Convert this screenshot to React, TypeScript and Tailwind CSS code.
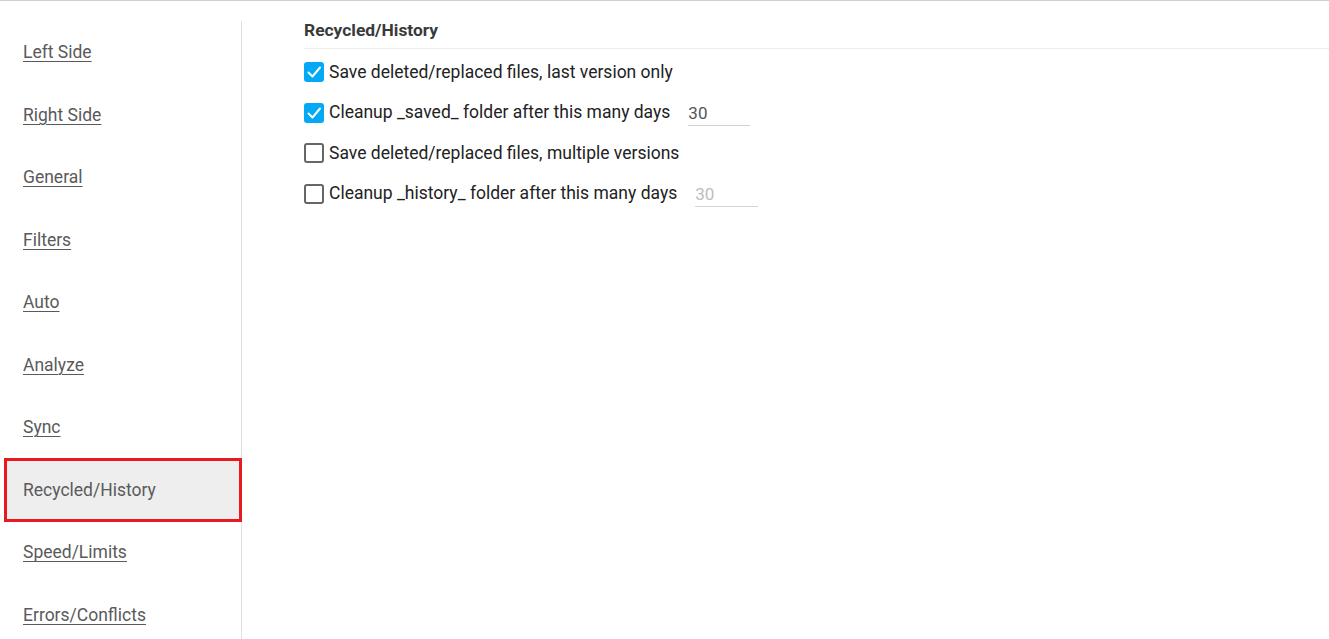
import { useState } from "react";

const navItems = [
  "Left Side",
  "Right Side",
  "General",
  "Filters",
  "Auto",
  "Analyze",
  "Sync",
  "Recycled/History",
  "Speed/Limits",
  "Errors/Conflicts",
];

function Checkbox({ checked, onChange }: { checked: boolean; onChange: () => void }) {
  return (
    <button
      onClick={onChange}
      className={
        checked
          ? "w-[20px] h-[20px] shrink-0 rounded-[3px] bg-[#03a9f4] flex items-center justify-center"
          : "w-[20px] h-[20px] shrink-0 rounded-[3px] border-2 border-[#666] bg-white"
      }
    >
      {checked && (
        <svg width="16" height="16" viewBox="0 0 16 16" fill="none">
          <path d="M2.5 8.5 L6.5 12.5 L14 3.5" stroke="white" strokeWidth="2" strokeLinecap="round" strokeLinejoin="round" />
        </svg>
      )}
    </button>
  );
}

export default function App() {
  const [active, setActive] = useState("Recycled/History");
  const [opts, setOpts] = useState([true, true, false, false]);
  const [savedDays, setSavedDays] = useState("30");
  const [historyDays, setHistoryDays] = useState("30");

  const toggle = (i: number) => setOpts((o) => o.map((v, j) => (j === i ? !v : v)));

  const rows = [
    { label: "Save deleted/replaced files, last version only" },
    { label: "Cleanup _saved_ folder after this many days", value: savedDays, set: setSavedDays, disabled: false },
    { label: "Save deleted/replaced files, multiple versions" },
    { label: "Cleanup _history_ folder after this many days", value: historyDays, set: setHistoryDays, disabled: true },
  ];

  return (
    <div className="w-[1329px] h-[639px] overflow-hidden bg-white border-t border-[#cfcfcf] font-['Roboto',sans-serif] flex">
      <nav className="w-[242px] shrink-0 mt-[20px] border-r border-[#e0e0e0] pl-[5px]">
        {navItems.map((item) => {
          const isActive = item === active;
          return (
            <div
              key={item}
              onClick={() => setActive(item)}
              className={
                isActive
                  ? "h-[62.5px] flex items-center pl-[18px] bg-[#eeeeee] outline-[3px] outline-solid outline-[#e8191f] -outline-offset-2 text-[17.5px] text-[#5a5a5a] cursor-pointer"
                  : "h-[62.5px] flex items-center pl-[18px] text-[17.5px] text-[#5a5a5a] underline underline-offset-[3px] decoration-1 cursor-pointer"
              }
            >
              {item}
            </div>
          );
        })}
      </nav>

      <main className="flex-1 pl-[62px] pt-[18px]">
        <h2 className="text-[17.4px] font-bold text-[#3a3a3a] leading-[22px] pb-[7px] border-b border-[#ececec]">
          Recycled/History
        </h2>
        <div className="pt-[13px] flex flex-col gap-[20.5px]">
          {rows.map((row, i) => (
            <div key={row.label} className="flex items-center h-[20px]">
              <Checkbox checked={opts[i]} onChange={() => toggle(i)} />
              <span className="ml-[5px] text-[17.5px] text-[#222] whitespace-nowrap">{row.label}</span>
              {row.set && (
                <input
                  value={row.value}
                  disabled={row.disabled}
                  onChange={(e) => row.set!(e.target.value)}
                  className={
                    row.disabled
                      ? "ml-[18px] mt-[3px] w-[63px] h-[24px] border-b border-[#d6d6d6] text-[17px] text-[#bdbdbd] bg-transparent outline-none"
                      : "ml-[18px] mt-[3px] w-[62px] h-[24px] border-b border-[#d0d0d0] text-[17px] text-[#555] bg-transparent outline-none"
                  }
                />
              )}
            </div>
          ))}
        </div>
      </main>
    </div>
  );
}
